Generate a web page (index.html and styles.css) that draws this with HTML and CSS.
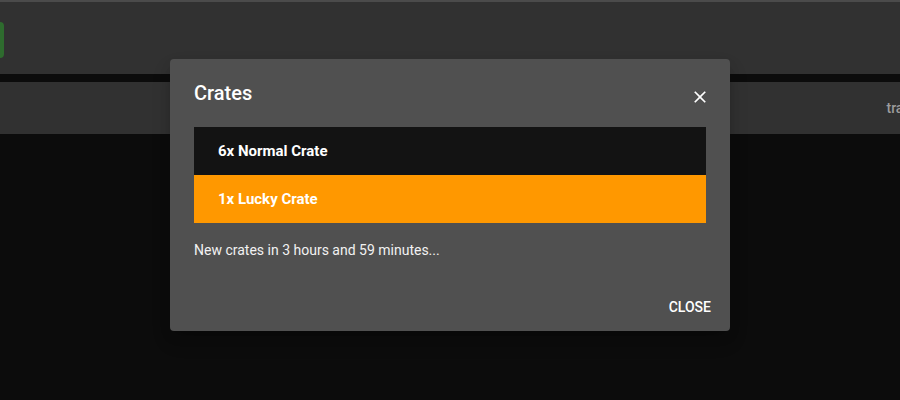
FILE: index.html
```html
<!DOCTYPE html>
<html lang="en">
<head>
  <meta charset="UTF-8" />
  <meta name="viewport" content="width=device-width, initial-scale=1.0" />
  <title>Crates</title>
  <link rel="stylesheet" href="styles.css">
</head>
<body>
  <header class="topbar">
    <button class="menu-btn" aria-label="menu"></button>
  </header>
  <nav class="subbar">
    <span class="tab">trades</span>
  </nav>
  <main class="page"></main>

  <div class="dialog">
    <div class="dialog-title">
      <h2>Crates</h2>
      <button class="icon-btn" aria-label="close">
        <svg width="20" height="20" viewBox="0 0 24 24"><path fill="#fff" d="M19 6.41L17.59 5 12 10.59 6.41 5 5 6.41 10.59 12 5 17.59 6.41 19 12 13.41 17.59 19 19 17.59 13.41 12z"/></svg>
      </button>
    </div>
    <ul class="crate-list">
      <li class="crate normal">6x Normal Crate</li>
      <li class="crate lucky">1x Lucky Crate</li>
    </ul>
    <p class="timer">New crates in 3 hours and 59 minutes...</p>
    <div class="dialog-actions">
      <button class="text-btn">Close</button>
    </div>
  </div>
</body>
</html>
```

FILE: styles.css
```css
body {
  font-family: Roboto, "Liberation Sans", Arial, sans-serif;
  background-color: #0c0c0c;
  color: #fff;
  margin: 0;
  padding: 0;
  overflow: hidden;
  height: 400px;
}
.topbar {
  box-sizing: border-box;
  height: 74px;
  border-top: 2px solid #4b4b4b;
  background-color: #313131;
  padding-top: 20px;
}
.menu-btn {
  display: block;
  width: 64px;
  height: 36px;
  margin-left: -60px;
  border: none;
  border-radius: 4px;
  background-color: #2e6b2e;
}
.subbar {
  margin-top: 8px;
  height: 52px;
  background-color: #313131;
  display: flex;
  align-items: center;
  justify-content: flex-end;
  overflow: hidden;
}
.tab {
  margin-right: -26px;
  font-size: 14px;
  font-weight: 500;
  line-height: 20px;
  color: #9c9c9c;
  white-space: nowrap;
}
.dialog {
  position: absolute;
  left: 170px;
  top: 59px;
  width: 560px;
  height: 272px;
  box-sizing: border-box;
  background-color: #505050;
  border-radius: 4px;
  box-shadow: 0 6px 12px -4px rgba(0, 0, 0, 0.3), 0 10px 20px 0 rgba(0, 0, 0, 0.12);
  display: flex;
  flex-direction: column;
}
.dialog-title {
  display: flex;
  align-items: center;
  justify-content: space-between;
  padding: 24px 20px 0 24px;
  height: 20px;
  margin-bottom: 24px;
}
.dialog-title h2 {
  margin: 0;
  font-size: 20px;
  font-weight: 500;
  line-height: 20px;
}
.icon-btn {
  background: none;
  border: none;
  padding: 0;
  width: 20px;
  height: 20px;
  margin-top: 8px;
  cursor: pointer;
}
.icon-btn svg {
  display: block;
}
.crate-list {
  list-style: none;
  margin: 0 24px;
  padding: 0;
}
.crate {
  height: 48px;
  padding-left: 24px;
  display: flex;
  align-items: center;
  font-size: 15px;
  font-weight: 700;
}
.crate.normal {
  background-color: #131313;
}
.crate.lucky {
  background-color: #ff9800;
}
.timer {
  margin: 17px 24px 0;
  font-size: 14px;
  line-height: 20px;
  color: #f2f2f2;
}
.dialog-actions {
  margin-top: auto;
  display: flex;
  justify-content: flex-end;
  padding: 8px;
  padding-bottom: 6px;
}
.text-btn {
  background: none;
  border: none;
  color: #fff;
  font-family: inherit;
  font-size: 14px;
  font-weight: 500;
  line-height: 20px;
  text-transform: uppercase;
  padding: 8px 11px;
  cursor: pointer;
}
```
